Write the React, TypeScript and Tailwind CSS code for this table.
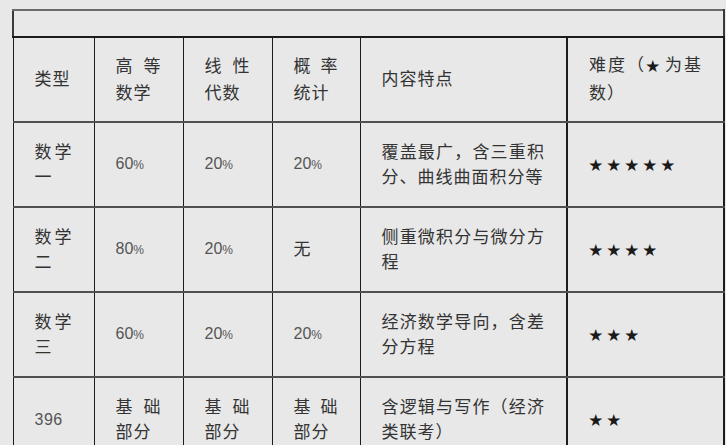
import React from "react";

const font = "font-['Liberation_Sans','Noto_Sans_CJK_SC',sans-serif]";
const cell =
  "border-x border-x-[#1c1c1c] border-y-2 border-y-[#505050] px-[21px] align-middle text-justify text-[17px] tracking-[1px] text-[#333] leading-[25px]";
const head =
  "border-x border-x-[#1c1c1c] border-y-2 border-y-[#505050] px-[21px] align-middle text-justify text-[17px] tracking-[1px] text-[#333] leading-[27px] font-normal";

function Pct({ v }: { v: string }) {
  return (
    <span className="text-[16px] tracking-[0px] text-[#555]">
      {v}
      <span className="text-[12px]">%</span>
    </span>
  );
}

function Stars({ n }: { n: number }) {
  return (
    <span className="text-[#1a1a1a] text-[13.5px] tracking-[4.5px] leading-[25px]">{"★".repeat(n)}</span>
  );
}

const rows: { t: string; a: React.ReactNode; b: React.ReactNode; c: React.ReactNode; d: string; s: number; num?: boolean }[] = [
  { t: "数学一", a: <Pct v="60" />, b: <Pct v="20" />, c: <Pct v="20" />, d: "覆盖最广，含三重积分、曲线曲面积分等", s: 5 },
  { t: "数学二", a: <Pct v="80" />, b: <Pct v="20" />, c: "无", d: "侧重微积分与微分方程", s: 4 },
  { t: "数学三", a: <Pct v="60" />, b: <Pct v="20" />, c: <Pct v="20" />, d: "经济数学导向，含差分方程", s: 3 },
  { t: "396", a: "基础部分", b: "基础部分", c: "基础部分", d: "含逻辑与写作（经济类联考）", s: 2, num: true },
];

export default function App() {
  return (
    <div className={`min-h-[445px] bg-[#e8e8e8] pl-[12px] pt-[9px] ${font}`}>
      <table className="w-[711px] table-fixed border-collapse bg-[#e8e8e8]">
        <colgroup>
          <col className="w-[81px]" />
          <col className="w-[89px]" />
          <col className="w-[89px]" />
          <col className="w-[88px]" />
          <col className="w-[207px]" />
          <col className="w-[157px]" />
        </colgroup>
        <tbody>
          <tr className="h-[27px]">
            <td colSpan={6} className="border-x-2 border-x-[#3a3a3a] border-t-2 border-t-[#6a6a6a] border-b-2 border-b-[#1c1c1c]" />
          </tr>
          <tr className="h-[85px]">
            <th className={head}>类型</th>
            <th className={head}>高等数学</th>
            <th className={head}>线性代数</th>
            <th className={head}>概率统计</th>
            <th className={head}>内容特点</th>
            <th className={`${head} border-l-2 border-r-2`}>
              难度（<span className="text-[13.5px] tracking-[4.5px] text-[#1a1a1a]">★</span>为基数）
            </th>
          </tr>
          {rows.map((r, i) => (
            <tr key={i} className="h-[85px]">
              <td className={cell}>
                {r.num ? <span className="text-[16px] tracking-[0.5px] text-[#555]">{r.t}</span> : r.t}
              </td>
              <td className={cell}>{r.a}</td>
              <td className={cell}>{r.b}</td>
              <td className={cell}>{r.c}</td>
              <td className={cell}>{r.d}</td>
              <td className={`${cell} border-l-2 border-r-2`}>
                <Stars n={r.s} />
              </td>
            </tr>
          ))}
        </tbody>
      </table>
    </div>
  );
}
